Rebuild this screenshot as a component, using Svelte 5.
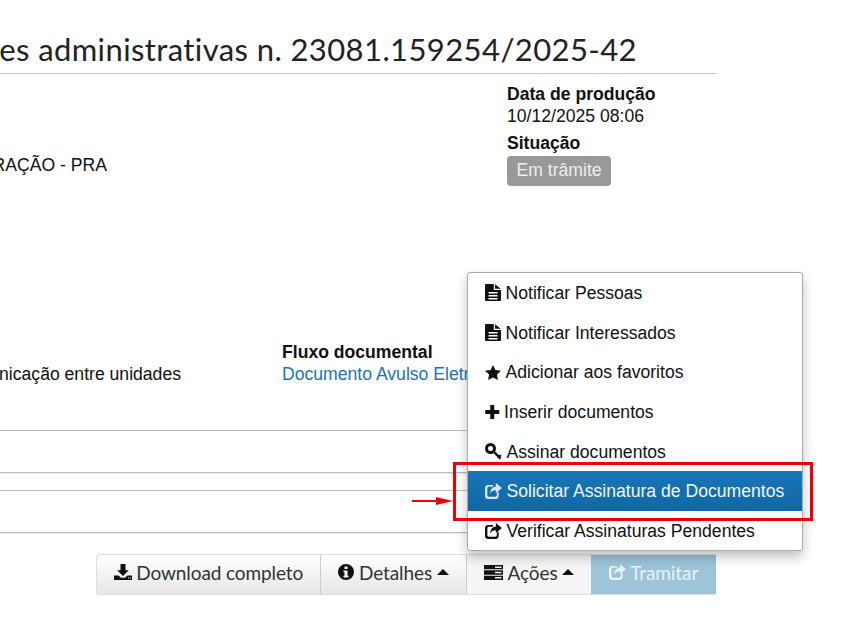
<script>
  const menu = [
    { icon: 'file', label: 'Notificar Pessoas' },
    { icon: 'file', label: 'Notificar Interessados' },
    { icon: 'star', label: 'Adicionar aos favoritos' },
    { icon: 'plus', label: 'Inserir documentos' },
    { icon: 'key', label: 'Assinar documentos' },
    { icon: 'share', label: 'Solicitar Assinatura de Documentos', active: true },
    { icon: 'share', label: 'Verificar Assinaturas Pendentes' }
  ];
  const sizes = {
    file: [16, 17, 16, 17], star: [16, 15, 17, 16], plus: [14.5, 14, 14, 14], key: [17, 17, 17, 17],
    share: [17, 16, 18, 17], download: [18, 16, 18, 16], info: [16, 16, 16, 16], server: [19, 15, 19, 15]
  };
</script>

{#snippet icon(name)}
  <svg class="ico" width={sizes[name][0]} height={sizes[name][1]} viewBox="0 0 {sizes[name][2]} {sizes[name][3]}" fill="currentColor" aria-hidden="true">
    {#if name === 'file'}
      <path fill-rule="evenodd" d="M1 0h7.800v6H16v10a1 1 0 0 1-1 1H1a1 1 0 0 1-1-1V1a1 1 0 0 1 1-1zM10 .3 15.800 4.800H10zM3.500 8v1.500h9V8zm0 3v1.500h9V11zm0 3v1.400h9V14z"/>
    {:else if name === 'star'}
      <path d="M8.500 0l2.600 5.300 5.900.8-4.300 4.100 1 5.800-5.200-2.800L3.300 16l1-5.800L0 6.100l5.900-.8z"/>
    {:else if name === 'plus'}
      <path d="M5 0h4v5h5v4H9v5H5V9H0V5h5z"/>
    {:else if name === 'key'}
      <path fill-rule="evenodd" d="M5.500 0a5.500 5.500 0 1 1 0 11 5.500 5.500 0 0 1 0-11zM5.500 3a2.500 2.500 0 1 0 0 5 2.500 2.500 0 0 0 0-5z"/>
      <path d="M8.500 10.200 10.200 8.500 14 12.300l1.300-.8 1.400 1.400-1.300 1 .8 1.300-1.500 1.300-1.200-1.500-1 .2-.3-1.500z"/>
    {:else if name === 'share'}
      <path fill-rule="evenodd" d="M3.500 2H8.500V4H4a1.500 1.500 0 0 0-1.500 1.500V13A1.500 1.500 0 0 0 4 14.500h7A1.500 1.500 0 0 0 12.500 13v-2.500l2-1.700V13.500A3.500 3.500 0 0 1 11 17H3.500A3.500 3.500 0 0 1 0 13.500v-8A3.500 3.500 0 0 1 3.500 2z"/>
      <path d="M11.500 0 18 5.300l-6.500 5.400V7.800C8.500 7.800 6.700 8.500 5.500 11.500c0-4.600 2.300-7.400 6-7.700z"/>
    {:else if name === 'download'}
      <path d="M6.500 0h5v6.300h3.300L9 12 3.200 6.300h3.300zM0 11.500h4.500l2.500 2.200h4l2.500-2.200H18V16H0zM14 13.500v1h1v-1zm2 0v1h1v-1z"/>
    {:else if name === 'info'}
      <path fill-rule="evenodd" d="M8 0a8 8 0 1 1 0 16A8 8 0 0 1 8 0zM6.500 2.500V5h3V2.500zM5.500 6.500v1.700h1v3.600h-1v1.700h5v-1.700h-1V6.500z"/>
    {:else if name === 'server'}
      <path fill-rule="evenodd" d="M0 0h19v4.300H0zm0 5.300h19v4.400H0zm0 5.400h19V15H0zM11 1.400v1.500h6.500V1.400zm0 5.300v1.500h6.500V6.700zM11 12.100v1.500h6.500v-1.500z"/>
    {/if}
  </svg>
{/snippet}

<div class="page">
  <h1 class="title"><span>Comunicações administrativas n. 23081.159254/2025-42</span></h1>

  <section class="meta meta-top">
    <div class="cell-end"><span>PRÓ-REITORIA DE ADMINISTRAÇÃO - PRA</span></div>
    <div class="facts">
      <strong>Data de produção</strong>
      <span>10/12/2025 08:06</span>
      <strong class="gap">Situação</strong>
      <span class="badge">Em trâmite</span>
    </div>
  </section>

  <section class="meta meta-flow">
    <div class="cell-end"><span>Comunicação entre unidades</span></div>
    <div class="flow">
      <strong>Fluxo documental</strong>
      <span class="link">Documento Avulso Eletrônico</span>
    </div>
  </section>

  <div class="panel panel-a"></div>
  <div class="panel panel-b"></div>

  <div class="btn-wrap">
    <div class="btn-group">
      <button class="btn">{@render icon('download')} Download completo</button>
      <button class="btn">{@render icon('info')} Detalhes <i class="caret"></i></button>
      <button class="btn open">{@render icon('server')} Ações <i class="caret"></i></button>
      <button class="btn primary">{@render icon('share')} Tramitar</button>
    </div>
  </div>

  <ul class="menu">
    {#each menu as item}
      <li class:active={item.active}>{@render icon(item.icon)}<span>{item.label}</span></li>
    {/each}
  </ul>

  <div class="mark-box"></div>
  <svg class="mark-arrow" width="42" height="10" viewBox="0 0 42 10"><path d="M0 4h26v2H0z" fill="#e00"/><path d="M24 1 41 5 24 9z" fill="#e00"/></svg>
</div>

<style>
  :global(body) { margin: 0; background: #fff; overflow: hidden; }
  .page {
    position: relative;
    width: 717px;
    height: 633px;
    font-family: "Liberation Sans", Arial, sans-serif;
    font-size: 17.6px;
    line-height: 22px;
    color: #111;
  }
  .title {
    display: flex;
    justify-content: flex-end;
    box-sizing: border-box;
    height: 74px;
    margin: 0;
    padding: 30px 80px 0 0;
    border-bottom: 1px solid #ccc;
    font-family: Lato, sans-serif;
    font-size: 31px;
    font-weight: 400;
    line-height: 38px;
    letter-spacing: .4px;
    white-space: nowrap;
    color: #222;
  }
  .meta { display: grid; }
  .meta-top { grid-template-columns: 107px 1fr; height: 267px; }
  .meta-flow { grid-template-columns: 181px 1fr; height: 89px; }
  .cell-end { display: flex; justify-content: flex-end; white-space: nowrap; }
  .meta-top .cell-end { padding-top: 80px; align-self: start; }
  .meta-flow .cell-end { padding-top: 22px; align-self: start; }
  .facts { display: flex; flex-direction: column; align-items: flex-start; padding: 9px 0 0 400px; }
  .facts .gap { margin-top: 5px; }
  .badge {
    margin-top: 2px;
    padding: 0 9.500px;
    height: 30px;
    line-height: 28px;
    background: #999;
    color: #eee;
    border-radius: 4px;
    box-sizing: border-box;
  }
  .flow { display: flex; flex-direction: column; padding-left: 101px; white-space: nowrap; }
  .link { color: #1a73b4; }
  .panel { box-sizing: border-box; height: 43px; border: 1px solid #bbb; border-left: 0; box-shadow: 0 1px 1px rgba(0,0,0,.08); }
  .panel-b { margin-top: 17px; }
  .btn-wrap { display: flex; justify-content: flex-end; margin-top: 22px; padding-right: 1px; }
  .btn-group { display: flex; height: 39px; width: 619px; border-radius: 4px 0 0 4px; box-shadow: -1px -1px 0 0 #ddd, -1px 1px 0 0 #ddd; }
  .btn {
    display: flex;
    align-items: center;
    justify-content: center;
    gap: 4.500px;
    height: 39px;
    padding: 0 0 5px;
    border: 0;
    border-right: 1px solid #ccc;
    background: linear-gradient(#fff, #e6e6e6);
    font: 19px/1 Lato, sans-serif;
    letter-spacing: -.1px;
    color: #333;
    white-space: nowrap;
  }
  .btn:first-child { border-radius: 4px 0 0 4px; width: 224px; }
  .btn:nth-child(2) { width: 146px; }
  .btn.open { width: 124px; background: #f5f5f5; border-right: 0; }
  .btn.primary { width: 125px; background: #9dc4d9; color: #e9f1f6; border: 0; }
  .caret { display: block; width: 0; height: 0; border: 6px solid transparent; border-top: 0; border-bottom: 6px solid #111; }
  .ico { flex: none; color: #111; }
  .btn.primary .ico { color: #e9f1f6; }
  .menu {
    position: absolute;
    left: 467px;
    top: 272px;
    width: 336px;
    height: 279px;
    box-sizing: border-box;
    margin: 0;
    padding: 0;
    list-style: none;
    background: #fff;
    border: 1px solid #aaa;
    border-radius: 3px;
    box-shadow: 0 6px 12px rgba(0,0,0,.25);
  }
  .menu li { display: flex; align-items: center; gap: 4.500px; height: 39.700px; padding: 0 17px; white-space: nowrap; }
  .menu li.active { background: linear-gradient(#1a76b8, #0f67a5); color: #f2f6fa; }
  .menu li.active .ico { color: #d5e5f2; }
  .mark-box { position: absolute; left: 453px; top: 462px; width: 360px; height: 59px; box-sizing: border-box; border: 3px solid #e00; }
  .mark-arrow { position: absolute; left: 412px; top: 496px; }
</style>
